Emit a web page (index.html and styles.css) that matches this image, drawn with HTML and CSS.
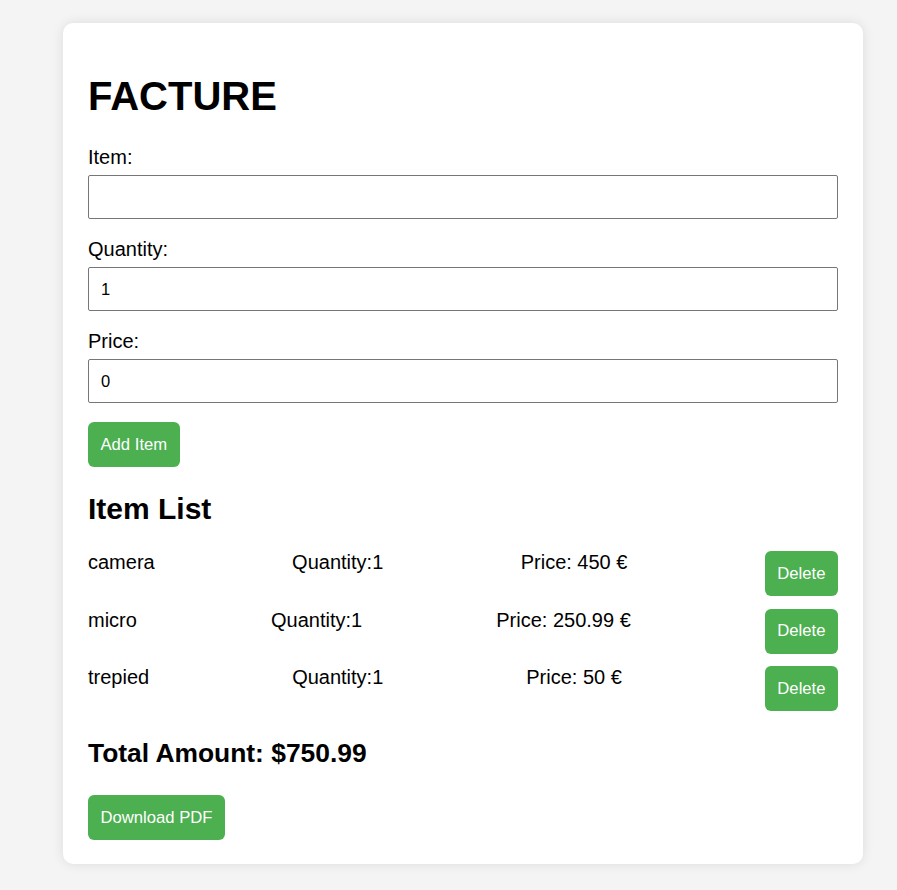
FILE: index.html
```html
<!DOCTYPE html>
<html lang="fr">
<head>
<meta charset="utf-8">
<title>Facture</title>
<link rel="stylesheet" href="styles.css">
</head>
<body>
<div class="card">
  <h1 class="title">FACTURE</h1>
  <label class="label" for="item">Item:</label>
  <input class="field" id="item" type="text" value="">
  <label class="label" for="qty">Quantity:</label>
  <input class="field" id="qty" type="number" value="1">
  <label class="label" for="price">Price:</label>
  <input class="field" id="price" type="number" value="0">
  <button class="btn" type="button">Add Item</button>

  <h2 class="subtitle">Item List</h2>
  <ul class="items">
    <li class="item"><span>camera</span><span>Quantity:1</span><span>Price: 450 €</span><button class="btn" type="button">Delete</button></li>
    <li class="item"><span>micro</span><span>Quantity:1</span><span>Price: 250.99 €</span><button class="btn" type="button">Delete</button></li>
    <li class="item"><span>trepied</span><span>Quantity:1</span><span>Price: 50 €</span><button class="btn" type="button">Delete</button></li>
  </ul>

  <h3 class="total">Total Amount: $750.99</h3>
  <button class="btn" type="button">Download PDF</button>
</div>
</body>
</html>
```

FILE: styles.css
```css
html, body {
  margin: 0;
  padding: 0;
}

body {
  background: #f4f4f4;
  font-family: "Liberation Sans", Arial, sans-serif;
  font-size: 20px;
  color: #000;
  padding-top: 23px;
  padding-bottom: 25px;
}

.card {
  box-sizing: border-box;
  width: 800px;
  margin-left: 63px;
  background: #fff;
  border-radius: 10px;
  padding: 25px 25px 24px;
  box-shadow: 0 0 12px rgba(0, 0, 0, 0.1);
}

.title {
  font-size: 40px;
  font-weight: bold;
  line-height: 46px;
  margin: 25px 0 27px;
}

.label {
  display: block;
  font-size: 20px;
  line-height: 23px;
  margin-bottom: 6px;
}

.field {
  display: block;
  box-sizing: border-box;
  width: 100%;
  height: 44px;
  margin: 0 0 19px;
  padding: 0 12px;
  border: 1px solid #767676;
  border-radius: 2px;
  font-family: "Liberation Sans", Arial, sans-serif;
  font-size: 16.5px;
  color: #000;
  background: #fff;
  -moz-appearance: textfield;
}

.field::-webkit-outer-spin-button,
.field::-webkit-inner-spin-button {
  -webkit-appearance: none;
  margin: 0;
}

.btn {
  display: inline-block;
  box-sizing: border-box;
  height: 45px;
  padding: 0 12.5px;
  border: none;
  border-radius: 6px;
  background: #4caf50;
  color: #fff;
  font-family: "Liberation Sans", Arial, sans-serif;
  font-size: 16.67px;
  cursor: pointer;
}

.subtitle {
  font-size: 30px;
  font-weight: bold;
  line-height: 34px;
  margin: 25px 0 25px;
}

.items {
  list-style: none;
  padding: 0;
  margin: 0;
}

.item {
  display: flex;
  justify-content: space-between;
  align-items: flex-start;
  margin-bottom: 12.5px;
  font-size: 20px;
  line-height: 23px;
}

.total {
  font-size: 26.4px;
  font-weight: bold;
  line-height: 30px;
  margin: 27px 0 27px;
}
```
